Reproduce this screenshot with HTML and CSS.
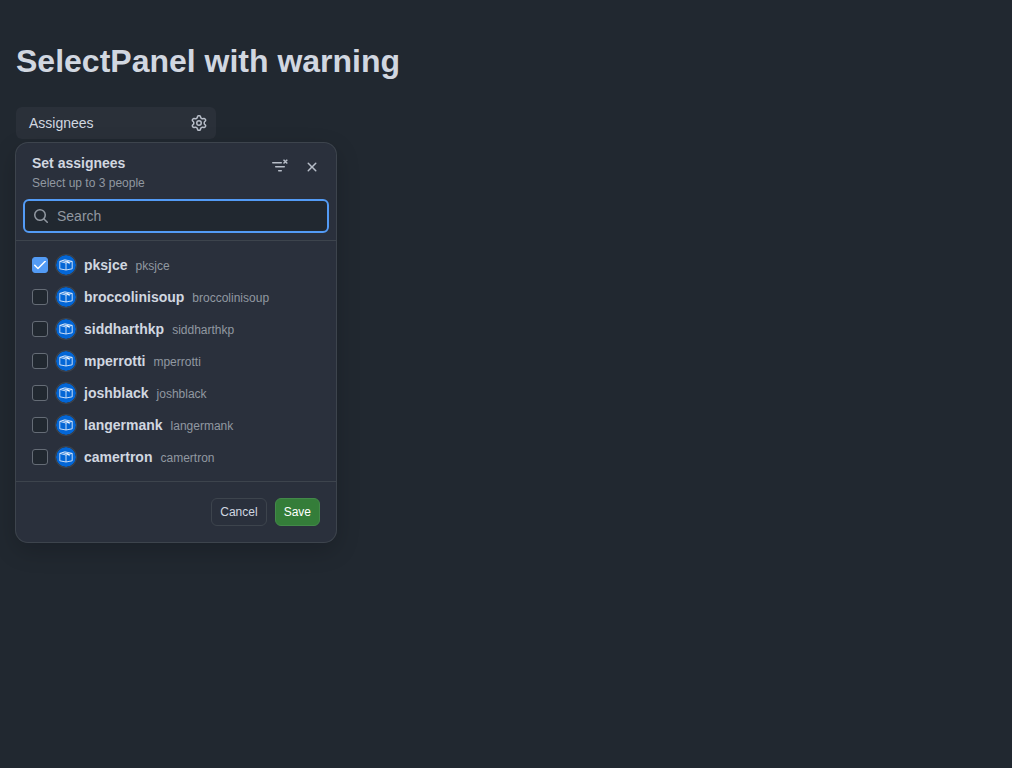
FILE: index.html
```html
<!DOCTYPE html>
<html lang="en">
<head>
<meta charset="utf-8">
<meta name="viewport" content="width=device-width, initial-scale=1">
<title>SelectPanel with warning</title>
<link rel="stylesheet" href="styles.css">
</head>
<body>
<svg class="sprite" aria-hidden="true">
  <symbol id="avatar" viewBox="0 0 20 20">
    <circle cx="10" cy="10" r="10" fill="#0366d6"/>
    <path d="M3.800 6.400 10 8v7l-6.200-1.200zM10 8l6.200-1.600v7.400L10 15M3.800 6.400l5-1.600 7.400 1.600M6.500 5.600l6 1.700" fill="none" stroke="#dbe9fb" stroke-width=".9" stroke-linejoin="round"/>
    <path d="m9 5.300 4.500 1.700v2.500L12 7.800z" fill="#fff"/>
  </symbol>
</svg>
<main class="page">
  <h1 class="page-title">SelectPanel with warning</h1>
  <button class="anchor" type="button" aria-expanded="true">
    <span>Assignees</span>
    <svg class="icon" viewBox="0 0 16 16" aria-hidden="true"><path d="M8 0a8.200 8.200 0 0 1 .701.031C9.444.095 9.990.645 10.160 1.290l.288 1.107c.018.066.079.158.212.224.231.114.454.243.668.386.123.082.233.090.299.071l1.103-.303c.644-.176 1.392.021 1.820.630.270.385.506.792.704 1.218.315.675.111 1.422-.364 1.891l-.814.806c-.049.048-.098.147-.088.294.016.257.016.515 0 .772-.010.147.038.246.088.294l.814.806c.475.469.679 1.216.364 1.891a7.977 7.977 0 0 1-.704 1.217c-.428.610-1.176.807-1.820.630l-1.102-.302c-.067-.019-.177-.011-.300.071a5.909 5.909 0 0 1-.668.386c-.133.066-.194.158-.211.224l-.290 1.106c-.168.646-.715 1.196-1.458 1.260a8.006 8.006 0 0 1-1.402 0c-.743-.064-1.289-.614-1.458-1.260l-.289-1.106c-.018-.066-.079-.158-.212-.224a5.738 5.738 0 0 1-.668-.386c-.123-.082-.233-.090-.299-.071l-1.103.303c-.644.176-1.392-.021-1.820-.630a8.120 8.120 0 0 1-.704-1.218c-.315-.675-.111-1.422.363-1.891l.815-.806c.050-.048.098-.147.088-.294a6.214 6.214 0 0 1 0-.772c.010-.147-.038-.246-.088-.294l-.815-.806C.635 6.045.431 5.298.746 4.623a7.920 7.920 0 0 1 .704-1.217c.428-.610 1.176-.807 1.820-.630l1.102.302c.067.019.177.011.300-.071.214-.143.437-.272.668-.386.133-.066.194-.158.211-.224l.290-1.106C6.009.645 6.556.095 7.299.030 7.530.010 7.764 0 8 0Zm-.571 1.525c-.036.003-.108.036-.137.146l-.289 1.105c-.147.561-.549.967-.998 1.189-.173.086-.340.183-.500.290-.417.278-.970.423-1.529.270l-1.103-.303c-.109-.030-.175.016-.195.045-.220.312-.412.644-.573.990-.014.031-.021.110.059.190l.815.806c.411.406.562.957.530 1.456a4.709 4.709 0 0 0 0 .582c.032.499-.119 1.050-.530 1.456l-.815.806c-.081.080-.073.159-.059.190.162.346.353.677.573.989.020.030.085.076.195.046l1.102-.303c.560-.153 1.113-.008 1.530.270.161.107.328.204.501.290.447.222.850.629.997 1.189l.289 1.105c.029.109.101.143.137.146a6.600 6.600 0 0 0 1.142 0c.036-.003.108-.036.137-.146l.289-1.105c.147-.561.549-.967.998-1.189.173-.086.340-.183.500-.290.417-.278.970-.423 1.529-.270l1.103.303c.109.029.175-.016.195-.045.220-.313.411-.644.573-.990.014-.031.021-.110-.059-.190l-.815-.806c-.411-.406-.562-.957-.530-1.456a4.709 4.709 0 0 0 0-.582c-.032-.499.119-1.050.530-1.456l.815-.806c.081-.080.073-.159.059-.190a6.464 6.464 0 0 0-.573-.989c-.020-.030-.085-.076-.195-.046l-1.102.303c-.560.153-1.113.008-1.530-.270a4.440 4.440 0 0 0-.501-.290c-.447-.222-.850-.629-.997-1.189l-.289-1.105c-.029-.110-.101-.143-.137-.146a6.600 6.600 0 0 0-1.142 0ZM11 8a3 3 0 1 1-6 0 3 3 0 0 1 6 0ZM9.500 8a1.500 1.500 0 1 0-3.001.001A1.500 1.500 0 0 0 9.500 8Z"/></svg>
  </button>

  <form class="panel" role="dialog" aria-labelledby="panel-title" aria-describedby="panel-description">
    <header class="panel-header">
      <div class="heading-row">
        <div class="heading">
          <h2 class="panel-title" id="panel-title">Set assignees</h2>
          <p class="panel-description" id="panel-description">Select up to 3 people</p>
        </div>
        <div class="header-actions">
          <button class="icon-button" type="button" aria-label="Clear selection">
            <svg class="icon" viewBox="0 0 16 16" aria-hidden="true"><path d="M.75 3.750h8.500M3.750 7.750h8.500M6.750 11.750h2.500M12 1.200l2.800 2.800M14.800 1.200 12 4" fill="none" stroke="currentColor" stroke-width="1.600" stroke-linecap="round"/></svg>
          </button>
          <button class="icon-button" type="button" aria-label="Close">
            <svg class="icon" viewBox="0 0 16 16" aria-hidden="true"><path d="M3.720 3.720a.75.75 0 0 1 1.060 0L8 6.940l3.220-3.220a.75.75 0 1 1 1.060 1.060L9.060 8l3.220 3.220a.75.75 0 1 1-1.060 1.060L8 9.060l-3.220 3.220a.75.75 0 0 1-1.060-1.060L6.940 8 3.720 4.780a.75.75 0 0 1 0-1.060Z"/></svg>
          </button>
        </div>
      </div>
      <div class="search">
        <svg class="icon" viewBox="0 0 16 16" aria-hidden="true"><path d="M10.680 11.740a6 6 0 0 1-7.922-8.982 6 6 0 0 1 8.982 7.922l3.040 3.040a.749.749 0 1 1-1.060 1.060ZM11.500 7a4.499 4.499 0 1 0-8.997 0A4.499 4.499 0 0 0 11.500 7Z"/></svg>
        <input class="search-input" type="text" placeholder="Search" aria-label="Search">
      </div>
    </header>

    <ul class="options">
      <li><label class="option"><input class="check" type="checkbox" checked><svg class="avatar" aria-hidden="true"><use href="#avatar"/></svg><span class="person"><span class="name">pksjce</span><span class="login">pksjce</span></span></label></li>
      <li><label class="option"><input class="check" type="checkbox"><svg class="avatar" aria-hidden="true"><use href="#avatar"/></svg><span class="person"><span class="name">broccolinisoup</span><span class="login">broccolinisoup</span></span></label></li>
      <li><label class="option"><input class="check" type="checkbox"><svg class="avatar" aria-hidden="true"><use href="#avatar"/></svg><span class="person"><span class="name">siddharthkp</span><span class="login">siddharthkp</span></span></label></li>
      <li><label class="option"><input class="check" type="checkbox"><svg class="avatar" aria-hidden="true"><use href="#avatar"/></svg><span class="person"><span class="name">mperrotti</span><span class="login">mperrotti</span></span></label></li>
      <li><label class="option"><input class="check" type="checkbox"><svg class="avatar" aria-hidden="true"><use href="#avatar"/></svg><span class="person"><span class="name">joshblack</span><span class="login">joshblack</span></span></label></li>
      <li><label class="option"><input class="check" type="checkbox"><svg class="avatar" aria-hidden="true"><use href="#avatar"/></svg><span class="person"><span class="name">langermank</span><span class="login">langermank</span></span></label></li>
      <li><label class="option"><input class="check" type="checkbox"><svg class="avatar" aria-hidden="true"><use href="#avatar"/></svg><span class="person"><span class="name">camertron</span><span class="login">camertron</span></span></label></li>
    </ul>

    <footer class="panel-footer">
      <button class="button" type="button">Cancel</button>
      <button class="button button-primary" type="submit">Save</button>
    </footer>
  </form>
</main>
</body>
</html>
```

FILE: styles.css
```css
* {
  box-sizing: border-box;
}

body {
  min-height: 100vh;
  margin: 0;
  background: #212830;
  color: #d1d7e0;
  font-family: "Liberation Sans", Arial, sans-serif;
  font-size: 14px;
  line-height: 20px;
}

button,
input {
  margin: 0;
  font: inherit;
  color: inherit;
}

.sprite {
  display: none;
}

.icon {
  display: block;
  flex: none;
  width: 16px;
  height: 16px;
  fill: currentColor;
}

.page {
  padding: 37px 16px 48px;
}

.page-title {
  margin: 0 0 22px;
  font-size: 32px;
  line-height: 48px;
}

.anchor {
  display: flex;
  align-items: center;
  justify-content: space-between;
  width: 200px;
  padding: 6px 9px 6px 13px;
  border: 0;
  border-radius: 6px;
  background: #2a3039;
}

.anchor .icon {
  color: #b7bdc8;
}

.panel {
  width: 320px;
  max-width: 100%;
  margin-top: 4px;
  border-radius: 12px;
  background: #2a303c;
  box-shadow: 0 0 0 1px #3d444d, 0 8px 24px #01040933;
}

.panel-header {
  padding: 8px 8px 7px;
  border-bottom: 1px solid #3d444d;
}

.heading-row {
  display: flex;
  justify-content: space-between;
  margin-bottom: 6px;
  padding-left: 8px;
}

.heading {
  padding-top: 2px;
}

.panel-title {
  margin: 0;
  font-size: 14px;
}

.panel-description {
  margin: 0;
  color: #9198a1;
  font-size: 12px;
}

.header-actions {
  display: flex;
}

.icon-button {
  display: grid;
  place-items: center;
  width: 32px;
  height: 32px;
  padding: 0;
  border: 0;
  border-radius: 6px;
  background: transparent;
  color: #b7bdc8;
}

.search {
  display: flex;
  align-items: center;
  gap: 8px;
  height: 34px;
  margin: 0 -1px;
  padding: 0 8px;
  border: 2px solid #539bf5;
  border-radius: 6px;
  background: #212830;
  color: #9198a1;
}

.search-input {
  flex: 1;
  min-width: 0;
  padding: 0;
  border: 0;
  outline: 0;
  background: transparent;
  color: #d1d7e0;
}

.search-input::placeholder {
  color: #9198a1;
  opacity: 1;
}

.options {
  margin: 0;
  padding: 8px;
  list-style: none;
}

.option {
  display: flex;
  align-items: center;
  gap: 8px;
  height: 32px;
  padding: 0 8px;
}

.check {
  appearance: none;
  display: grid;
  place-items: center;
  flex: none;
  width: 16px;
  height: 16px;
  border: 1px solid #656c76;
  border-radius: 3px;
  background: #212830;
}

.check:checked {
  border-color: #539bf5;
  background: #539bf5;
}

.check:checked::before {
  content: "";
  width: 12px;
  height: 9px;
  background: #fff;
  clip-path: path("M11.780.220a.749.749 0 0 1 0 1.060L4.520 8.541a.749.749 0 0 1-1.062 0L.202 5.285a.749.749 0 0 1 .020-1.042.749.749 0 0 1 1.042-.018l2.725 2.724L10.718.220a.749.749 0 0 1 1.062 0Z");
}

.avatar {
  flex: none;
  width: 20px;
  height: 20px;
  border-radius: 50%;
  box-shadow: 0 0 0 1px #3d444d;
}

.person {
  display: flex;
  align-items: baseline;
  gap: 8px;
}

.name {
  font-weight: 700;
}

.login {
  color: #9198a1;
  font-size: 12px;
}

.panel-footer {
  display: flex;
  justify-content: flex-end;
  gap: 8px;
  padding: 16px;
  border-top: 1px solid #3d444d;
}

.button {
  height: 28px;
  padding: 0 8px;
  border: 1px solid #3d444d;
  border-radius: 6px;
  background: transparent;
  font-size: 12px;
}

.button-primary {
  border-color: #43894a;
  background: #347d39;
  color: #fff;
}
```
